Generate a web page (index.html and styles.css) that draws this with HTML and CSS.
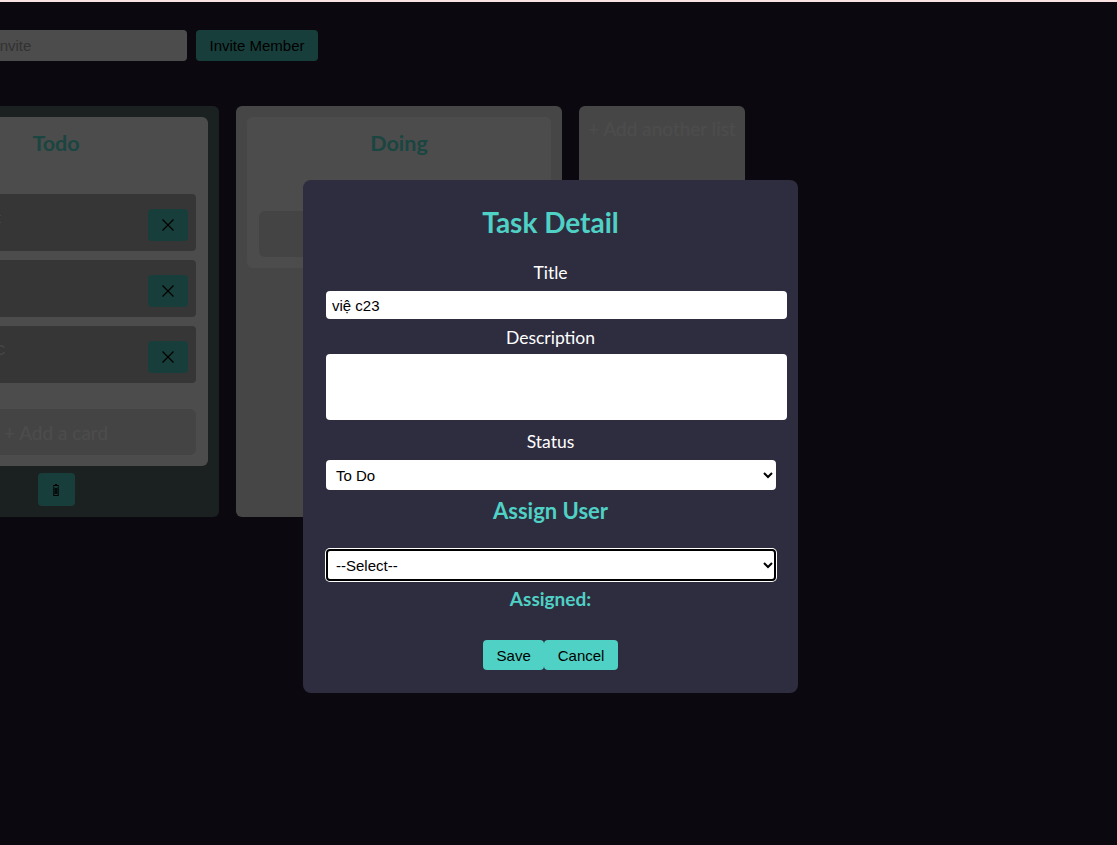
FILE: index.html
```html
<!DOCTYPE html>
<html lang="vi">
<head>
<meta charset="utf-8">
<title>Board</title>
<link rel="stylesheet" href="styles.css">
</head>
<body>
<div class="strip"></div>
<div class="page">
  <div class="invite-row">
    <input class="invite-input" type="text" placeholder="Email to invite">
    <button class="invite-btn">Invite Member</button>
  </div>

  <div class="board">
    <div class="column column-active">
      <div class="list">
        <h3 class="list-title">Todo</h3>
        <div class="cards">
          <div class="card"><span class="card-text">Học React</span><button class="card-del"><svg width="14" height="14" viewBox="0 0 14 14"><path d="M1.5 1.5L12.5 12.5M12.5 1.5L1.5 12.5" stroke="#000" stroke-width="1.3" fill="none"/></svg></button></div>
          <div class="card"><span class="card-text">Đọc sách</span><button class="card-del"><svg width="14" height="14" viewBox="0 0 14 14"><path d="M1.5 1.5L12.5 12.5M12.5 1.5L1.5 12.5" stroke="#000" stroke-width="1.3" fill="none"/></svg></button></div>
          <div class="card"><span class="card-text">Lập trình C</span><button class="card-del"><svg width="14" height="14" viewBox="0 0 14 14"><path d="M1.5 1.5L12.5 12.5M12.5 1.5L1.5 12.5" stroke="#000" stroke-width="1.3" fill="none"/></svg></button></div>
        </div>
        <button class="add-card">+ Add a card</button>
      </div>
      <button class="trash-btn"><svg width="8" height="14" viewBox="0 0 8 14"><path d="M1 2.5H7M3 1.5H5M1.8 3.5V12.5H6.2V3.5M3.3 5V11M4.7 5V11" stroke="#0c0c0c" stroke-width="1.1" fill="none"/></svg></button>
    </div>

    <div class="column">
      <div class="list">
        <h3 class="list-title">Doing</h3>
        <div class="cards"></div>
        <button class="add-card">+ Add a card</button>
      </div>
      <button class="trash-btn"><svg width="8" height="14" viewBox="0 0 8 14"><path d="M1 2.5H7M3 1.5H5M1.8 3.5V12.5H6.2V3.5M3.3 5V11M4.7 5V11" stroke="#0c0c0c" stroke-width="1.1" fill="none"/></svg></button>
    </div>

    <div class="add-list">+ Add another list</div>
  </div>
</div>

<div class="overlay">
  <div class="modal">
    <h2 class="modal-title">Task Detail</h2>
    <label class="field-label lbl-title">Title</label>
    <input class="field-input" type="text" value="việ c23">
    <label class="field-label lbl-desc">Description</label>
    <textarea class="field-area"></textarea>
    <label class="field-label lbl-status">Status</label>
    <select class="field-select">
      <option>To Do</option>
      <option>Doing</option>
      <option>Done</option>
    </select>
    <h3 class="assign-title">Assign User</h3>
    <select class="field-select user-select">
      <option>--Select--</option>
    </select>
    <div class="assigned">Assigned:</div>
    <div class="actions">
      <button class="act-btn">Save</button>
      <button class="act-btn">Cancel</button>
    </div>
  </div>
</div>
</body>
</html>
```

FILE: styles.css
```css
html, body {
  margin: 0;
  padding: 0;
}

body {
  background: #252135;
  overflow: hidden;
  height: 845px;
  font-family: "Lato", "Open Sans", sans-serif;
}

.strip {
  height: 2px;
  background: #fbe3e3;
}

.page {
  margin-left: -107px;
  padding-top: 28px;
}

.invite-row {
  display: flex;
  gap: 9px;
  padding-left: 37px;
  height: 31px;
}

.invite-input {
  width: 257px;
  height: 31px;
  box-sizing: border-box;
  border: none;
  border-radius: 4px;
  padding: 0 8px;
  background: #ffffff;
  font-family: "Liberation Sans", Arial, sans-serif;
  font-size: 15px;
}

.invite-input::placeholder {
  color: #a8a8a8;
}

.invite-btn {
  height: 31px;
  border: none;
  border-radius: 4px;
  background: #4fd1c5;
  color: #000;
  padding: 0 13.5px;
  font-family: "Liberation Sans", Arial, sans-serif;
  font-size: 15px;
}

.board {
  display: flex;
  gap: 17px;
  margin-top: 45px;
  align-items: stretch;
}

.column {
  width: 326px;
  box-sizing: border-box;
  padding: 11px 11px 11px;
  background: #ececec;
  border-radius: 6px;
  display: flex;
  flex-direction: column;
  align-items: center;
}

.column-active {
  background: #5d6e6e;
}

.list {
  align-self: stretch;
  background: #ffffff;
  border-radius: 6px;
  padding: 12px 12px 11px;
}

.list-title {
  margin: 0 0 37px;
  text-align: center;
  font-size: 21.5px;
  line-height: 28px;
  font-weight: 700;
  color: #5ae6da;
}

.cards {
  display: flex;
  flex-direction: column;
}

.card {
  height: 57px;
  box-sizing: border-box;
  margin-bottom: 9px;
  background: #b4b4b4;
  border-radius: 4px;
  padding: 15px 8px 10px 15px;
  display: flex;
  justify-content: space-between;
  align-items: flex-start;
}

.card-text {
  line-height: 18px;
  font-family: "Liberation Sans", Arial, sans-serif;
  font-size: 15px;
  color: #efefef;
}

.card-del {
  width: 40px;
  height: 32px;
  border: none;
  border-radius: 4px;
  background: #4fd1c5;
  display: flex;
  align-items: center;
  justify-content: center;
  padding: 0;
}

.add-card {
  display: block;
  width: 100%;
  height: 46px;
  margin-top: 17px;
  border: none;
  border-radius: 6px;
  background: #e3e3e3;
  color: #ffffff;
  font-family: "Lato", "Open Sans", sans-serif;
  font-size: 19px;
}

.trash-btn {
  margin-top: 7px;
  width: 37px;
  height: 33px;
  border: none;
  border-radius: 4px;
  background: #4fd1c5;
  display: flex;
  align-items: center;
  justify-content: center;
  padding: 0;
}

.add-list {
  align-self: flex-start;
  width: 166px;
  min-height: 160px;
  box-sizing: border-box;
  background: #ececec;
  border-radius: 6px;
  padding: 11px 4px;
  text-align: center;
  color: #ffffff;
  font-size: 19px;
  line-height: 24px;
}

/* modal */
.overlay {
  position: fixed;
  top: 2px;
  left: 0;
  right: 0;
  bottom: 0;
  background: rgba(0, 0, 0, 0.7);
}

.modal {
  position: absolute;
  left: 303px;
  top: 178px;
  width: 495px;
  box-sizing: border-box;
  padding: 25px 23px 23px;
  background: #2e2d3f;
  border-radius: 8px;
  display: flex;
  flex-direction: column;
  align-items: stretch;
  color: #ffffff;
}

.modal-title {
  margin: 0;
  text-align: center;
  color: #4fd1c5;
  font-size: 28px;
  line-height: 34px;
  font-weight: 700;
}

.field-label {
  display: block;
  text-align: center;
  font-size: 17.5px;
  line-height: 22px;
}

.lbl-title { margin-top: 23px; }
.lbl-desc { margin-top: 8px; }
.lbl-status { margin-top: 11px; }

.field-input {
  width: 100%;
  box-sizing: content-box;
  height: 28px;
  padding: 0 6px;
  margin-top: 7px;
  border: none;
  border-radius: 4px;
  background: #fff;
  font-family: "Liberation Sans", Arial, sans-serif;
  font-size: 15px;
  color: #000;
}

.field-area {
  width: 100%;
  box-sizing: content-box;
  height: 66px;
  padding: 0 6px;
  margin-top: 5px;
  border: none;
  border-radius: 4px;
  background: #fff;
  resize: none;
  display: block;
}

.field-select {
  width: 450px;
  height: 30px;
  margin-top: 7px;
  border: none;
  border-radius: 4px;
  background: #fff;
  padding: 0 6px;
  font-family: "Liberation Sans", Arial, sans-serif;
  font-size: 15px;
  color: #000;
}

.assign-title {
  margin: 8px 0 0;
  text-align: center;
  color: #4fd1c5;
  font-size: 22px;
  line-height: 26px;
  font-weight: 700;
}

.user-select {
  margin-top: 25px;
  height: 32px;
  outline: 2px solid #000;
  outline-offset: -2px;
  box-shadow: 0 0 0 1px #fff;
}

.assigned {
  margin-top: 7px;
  text-align: center;
  color: #4fd1c5;
  font-size: 19px;
  line-height: 22px;
  font-weight: 700;
}

.actions {
  margin-top: 30px;
  display: flex;
  justify-content: center;
}

.act-btn {
  height: 30px;
  border: none;
  border-radius: 4px;
  background: #4fd1c5;
  color: #000;
  padding: 0 13.5px;
  font-family: "Liberation Sans", Arial, sans-serif;
  font-size: 15px;
}
```
